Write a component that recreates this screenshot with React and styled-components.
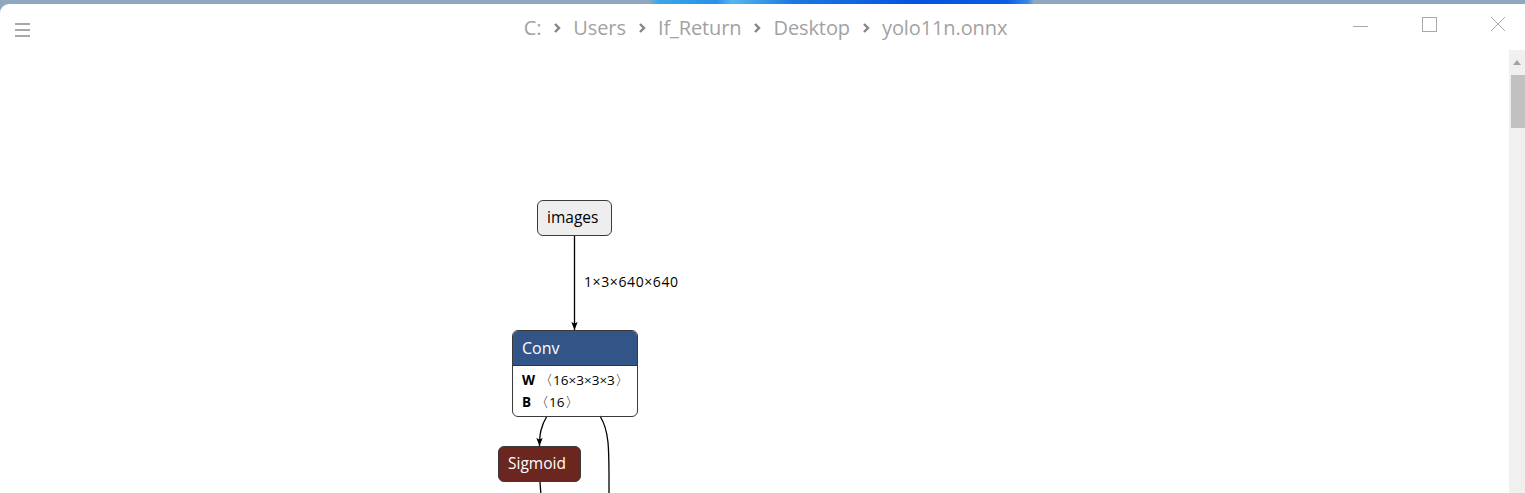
import React from 'react'
import styled, { createGlobalStyle } from 'styled-components'

const GlobalStyle = createGlobalStyle`
  html, body {
    margin: 0;
    padding: 0;
    overflow: hidden;
    background: #fff;
  }
`

const Desktop = styled.div`
  width: 1525px;
  height: 493px;
  display: flex;
  flex-direction: column;
  background: linear-gradient(90deg,
    #8fa8c0 0%, #8fa8c0 42.5%, #3aa6ea 43.2%, #2a8fe6 47%, #56b6ee 48%,
    #1a78e2 52%, #0552de 60%, #0a5ce2 66%, #3a86e6 67.4%, #8fa8c0 67.8%, #8fa8c0 100%);
  font-family: "Open Sans", "Noto Sans", sans-serif;
`

const Window = styled.div`
  margin-top: 4px;
  flex: 1;
  display: flex;
  flex-direction: column;
  background: #fff;
  border-top-left-radius: 9px;
  overflow: hidden;
`

const TitleBar = styled.div`
  height: 46px;
  display: flex;
  align-items: center;
  position: relative;
`

const MenuButton = styled.div`
  width: 15px;
  margin-left: 15px;
  margin-top: 6px;
  display: flex;
  flex-direction: column;
  gap: 4px;
  span {
    height: 2px;
    background: #a8a8a8;
  }
`

const Crumbs = styled.div`
  flex: 1;
  display: flex;
  justify-content: center;
  align-items: center;
  gap: 12px;
  margin-left: -24px;
  padding-top: 1px;
  font-size: 20px;
  color: #a2a2a2;
  letter-spacing: -0.1px;
`

const Chevron = () => (
  <svg width="8" height="12" viewBox="0 0 8 12">
    <path d="M2 2 L6 6 L2 10" fill="none" stroke="#858585" strokeWidth="2.4" />
  </svg>
)

const Controls = styled.div`
  position: absolute;
  right: -7px;
  top: 0;
  display: flex;
`

const CtrlButton = styled.div`
  width: 69px;
  height: 40px;
  display: flex;
  align-items: center;
  justify-content: center;
`

const Body = styled.div`
  flex: 1;
  display: flex;
`

const Canvas = styled.div`
  flex: 1;
  position: relative;
`

const Scrollbar = styled.div`
  width: 16px;
  background: #f0f0f0;
  display: flex;
  flex-direction: column;
  align-items: flex-end;
`

const ScrollArrow = styled.div`
  width: 16px;
  height: 25px;
  display: flex;
  align-items: center;
  justify-content: center;
  &::before {
    content: '';
    border-left: 4px solid transparent;
    border-right: 4px solid transparent;
    border-bottom: 5px solid #a3a3a3;
  }
`

const Thumb = styled.div`
  width: 14px;
  height: 53px;
  background: #c1c1c1;
`

const Node = styled.div`
  position: absolute;
  box-sizing: border-box;
  border: 1.5px solid #3a3a3a;
  border-radius: 6px;
  overflow: hidden;
  line-height: 1;
`

const SimpleNode = styled(Node)`
  height: 36px;
  display: flex;
  align-items: center;
  padding: 0 9px;
  font-size: 15.5px;
  background: ${p => p.$bg};
  color: ${p => p.$fg};
`

const OpHeader = styled.div`
  height: 34px;
  display: flex;
  align-items: center;
  padding-left: 9px;
  background: #335487;
  color: #fff;
  font-size: 16px;
  border-bottom: 1px solid #333;
`

const Attrs = styled.div`
  background: #fff;
  padding: 8px 9px 0;
  display: flex;
  flex-direction: column;
  gap: 8px;
  font-size: 13.5px;
  color: #000;
`

const Attr = styled.div`
  display: flex;
  gap: 4px;
  b { font-weight: 700; }
`

const EdgeLabel = styled.div`
  position: absolute;
  font-size: 14px;
  letter-spacing: 0.6px;
  color: #000;
`

const Edges = styled.svg`
  position: absolute;
  left: 0;
  top: 0;
  width: 100%;
  height: 100%;
  overflow: visible;
`

const OFFSET = 50

export default function App() {
  return (
    <>
      <GlobalStyle />
      <Desktop>
        <Window>
          <TitleBar>
            <MenuButton><span /><span /><span /></MenuButton>
            <Crumbs>
              <span>C:</span><Chevron />
              <span>Users</span><Chevron />
              <span>If_Return</span><Chevron />
              <span>Desktop</span><Chevron />
              <span>yolo11n.onnx</span>
            </Crumbs>
            <Controls>
              <CtrlButton>
                <svg width="16" height="16" viewBox="0 0 16 16"><path d="M1 10.5 H16" stroke="#a8a8a8" strokeWidth="1" /></svg>
              </CtrlButton>
              <CtrlButton>
                <svg width="16" height="16" viewBox="0 0 16 16"><rect x="1.5" y="1.5" width="14" height="14" fill="none" stroke="#a8a8a8" strokeWidth="1" /></svg>
              </CtrlButton>
              <CtrlButton>
                <svg width="16" height="16" viewBox="0 0 16 16"><path d="M1 1 L15 15 M15 1 L1 15" stroke="#a8a8a8" strokeWidth="1" /></svg>
              </CtrlButton>
            </Controls>
          </TitleBar>
          <Body>
            <Canvas>
              <Edges>
                <defs>
                  <marker id="arrow" viewBox="0 0 10 10" refX="10" refY="5" markerWidth="8" markerHeight="8" orient="auto-start-reverse" markerUnits="userSpaceOnUse">
                    <path d="M0 1 L10 5 L0 9 L2 5 Z" fill="#000" />
                  </marker>
                </defs>
                <path d={`M574.5 ${235 - OFFSET} V${330 - OFFSET}`} stroke="#000" strokeWidth="1.3" fill="none" markerEnd="url(#arrow)" />
                <path d={`M547 ${416 - OFFSET} C 541 ${426 - OFFSET}, 539.5 ${434 - OFFSET}, 539.5 ${446 - OFFSET}`} stroke="#000" strokeWidth="1.3" fill="none" markerEnd="url(#arrow)" />
                <path d={`M600 ${416 - OFFSET} C 610 ${432 - OFFSET}, 609 ${450 - OFFSET}, 609 ${500 - OFFSET}`} stroke="#000" strokeWidth="1.3" fill="none" />
                <path d={`M540 ${481 - OFFSET} C 540 ${486 - OFFSET}, 541 ${490 - OFFSET}, 541 ${500 - OFFSET}`} stroke="#000" strokeWidth="1.3" fill="none" />
              </Edges>
              <SimpleNode $bg="#eeeeee" $fg="#000" style={{ left: 537, top: 200 - OFFSET, width: 75 }}>images</SimpleNode>
              <EdgeLabel style={{ left: 584, top: 272 - OFFSET }}>1×3×640×640</EdgeLabel>
              <Node style={{ left: 512, top: 330 - OFFSET, width: 126, height: 87 }}>
                <OpHeader>Conv</OpHeader>
                <Attrs>
                  <Attr><b>W</b><span>〈16×3×3×3〉</span></Attr>
                  <Attr><b>B</b><span>〈16〉</span></Attr>
                </Attrs>
              </Node>
              <SimpleNode $bg="#6b2620" $fg="#fff" style={{ left: 498, top: 446 - OFFSET, width: 83 }}>Sigmoid</SimpleNode>
            </Canvas>
            <Scrollbar>
              <ScrollArrow />
              <Thumb />
            </Scrollbar>
          </Body>
        </Window>
      </Desktop>
    </>
  )
}
